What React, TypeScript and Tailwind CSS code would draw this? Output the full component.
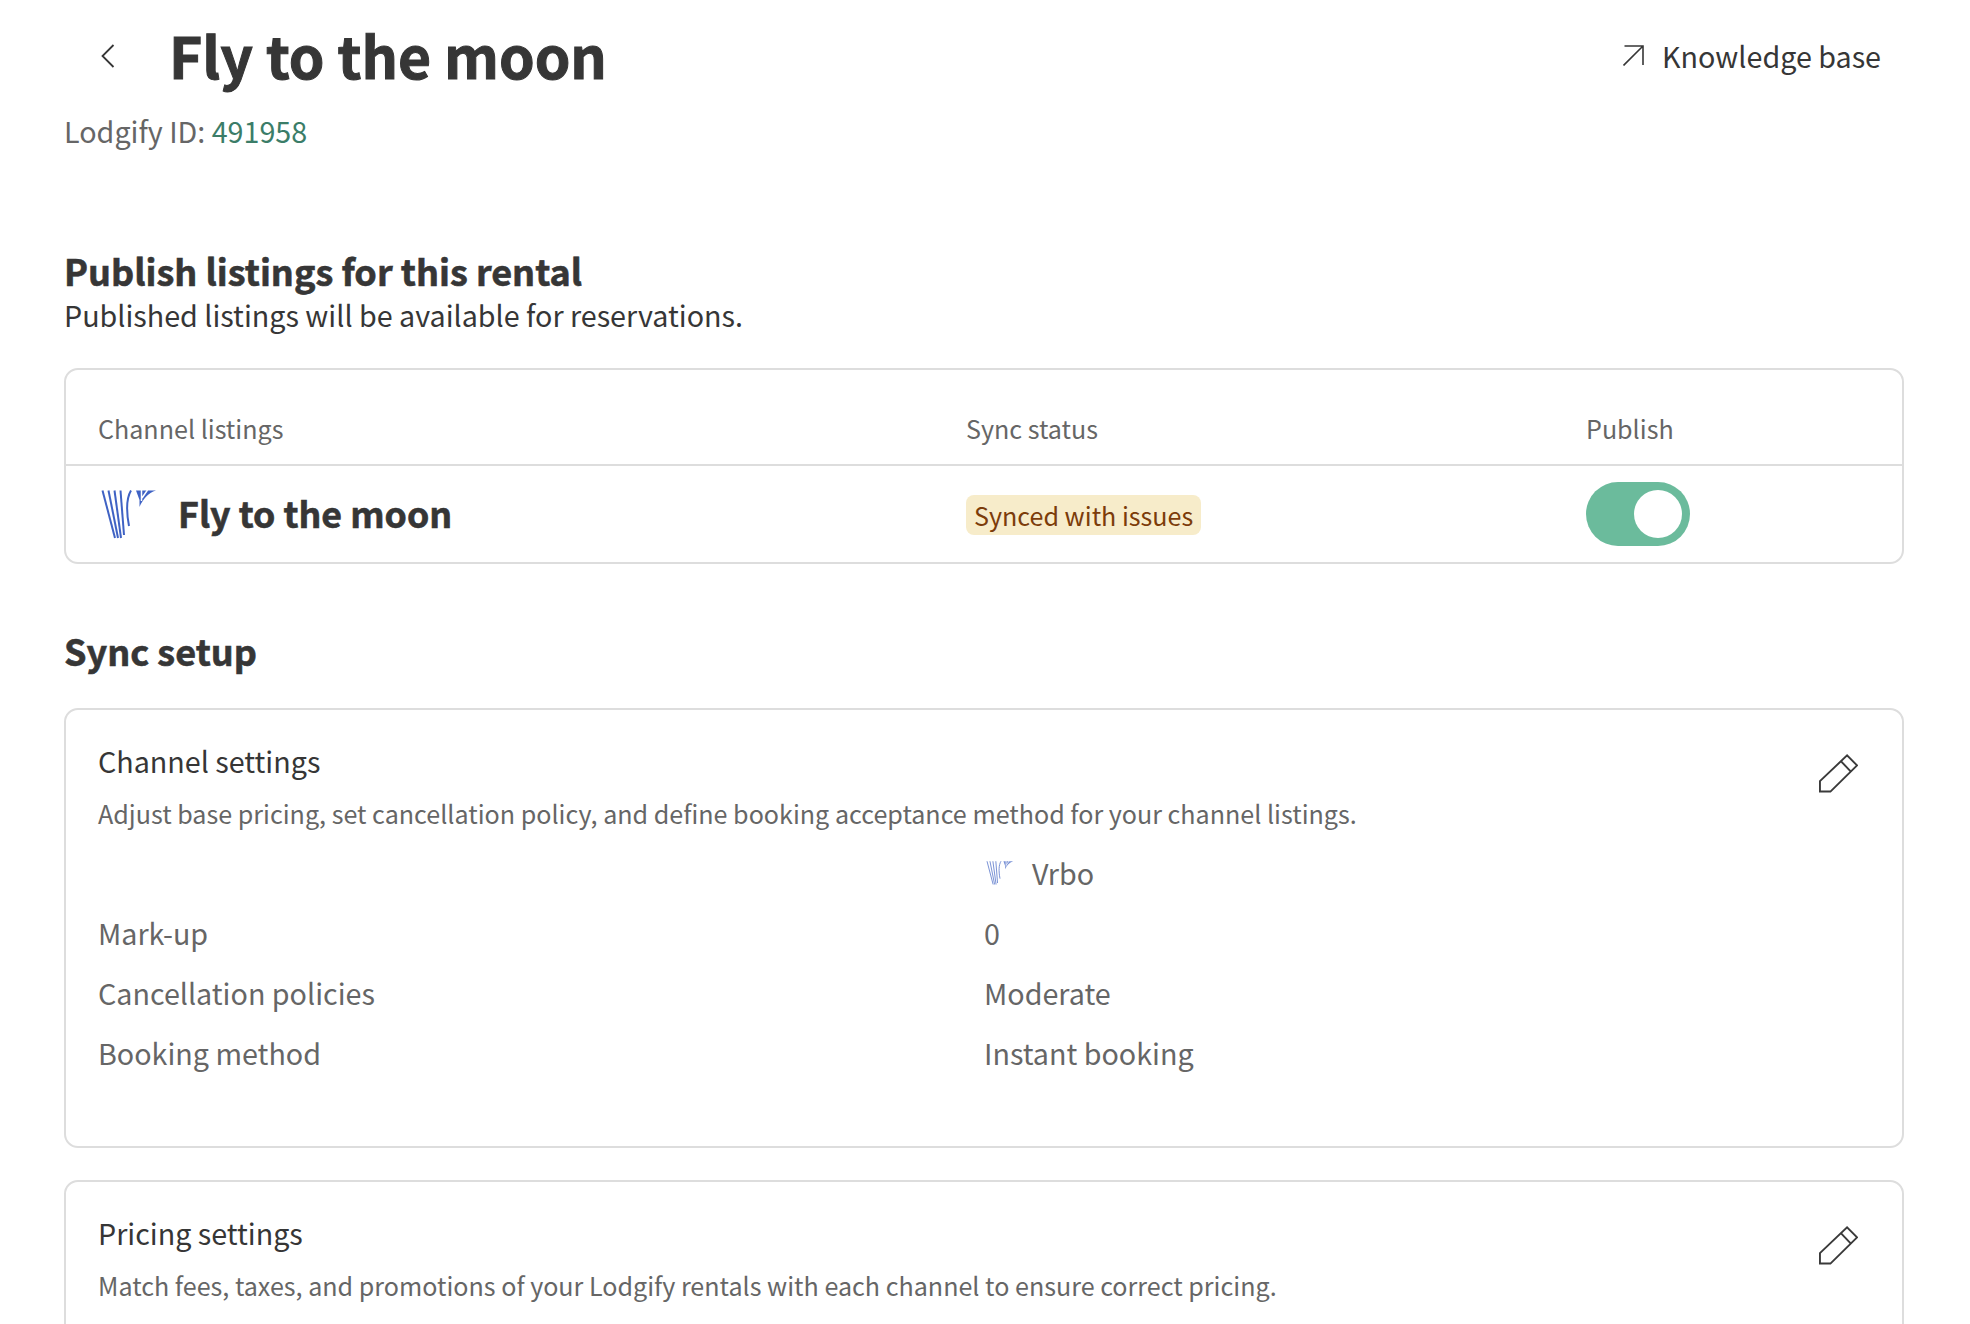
function Logo({ className }: { className: string }) {
  return (
    <svg viewBox="0 0 56 49" className={className} fill="none" stroke="#3f62c4">
      <g strokeWidth="2">
        <path d="M1.5 0.5 L14 48" />
        <path d="M7.5 0.5 L17 48" />
        <path d="M13.5 0.5 L20 48" />
        <path d="M19.5 0.5 L23 45" />
        <path d="M30 0.5 C 25.5 8 25 20 28 36" />
      </g>
      <path d="M35 0.5 H55 C 47 3 42 9 38.5 17 L38.5 10 Z" fill="#3f62c4" stroke="none" />
      <path d="M40.5 0 L40.5 11 M46.5 0 L41 8" stroke="#ffffff" strokeWidth="1.5" />
    </svg>
  );
}
function Pencil() {
  return (
    <svg viewBox="0 0 41 41" className="h-[39px] w-[39px]" fill="none" stroke="#3a3a3a" strokeWidth="2">
      <path d="M1 39.5 V28.5 L29.5 1.5 L40 12 L12 39.5 Z" />
      <path d="M23 7.5 L33.5 18.5" />
    </svg>
  );
}
function SettingRow({ label, value }: { label: string; value: string }) {
  return (
    <div className="flex h-[60px] items-center text-[28.7px] text-[#666666]">
      <div className="w-[886px]">{label}</div>
      <div>{value}</div>
    </div>
  );
}
export default function App() {
  return (
    <div className="h-[1324px] w-[1970px] overflow-hidden bg-white pl-[64px] pr-[66px] text-[#363636] [font-family:'Noto_Sans_CJK_SC','Noto_Sans_CJK_JP',sans-serif]">
      <div className="flex h-[112px] items-center justify-between">
        <div className="flex items-center">
          <svg viewBox="0 0 14 24" className="ml-[37px] h-[24px] w-[14px]" fill="none" stroke="#363636" strokeWidth="1.8">
            <path d="M12.5 1 L1.5 12 L12.5 23" />
          </svg>
          <h1 className="mb-[4px] ml-[54px] text-[57px] font-bold leading-[72px] [-webkit-text-stroke:1px_#363636]">Fly to the moon</h1>
        </div>
        <div className="mb-[1px] mr-[23px] flex items-center gap-[18px] text-[28.7px] leading-[40px]">
          <svg viewBox="0 0 21 21" className="h-[21px] w-[21px]" fill="none" stroke="#363636" strokeWidth="1.6">
            <path d="M0.5 20.5 L19.5 1.5 M1.5 1 H20 V20" />
          </svg>
          Knowledge base
        </div>
      </div>
      <div className="text-[28.7px] leading-[38px] text-[#666666]">
        Lodgify ID: <span className="text-[#3b7d68]">491958</span>
      </div>
      <h2 className="mt-[98px] text-[36px] font-bold leading-[44px] [-webkit-text-stroke:0.6px_#363636]">Publish listings for this rental</h2>
      <p className="pt-[1px] text-[28.7px] leading-[44px]">Published listings will be available for reservations.</p>
      <div className="mt-[31px] rounded-[14px] border-2 border-[#dddddd]">
        <div className="flex h-[94px] items-end pb-[18px] pl-[32px] text-[25.1px] leading-[36px] text-[#666666]">
          <div className="w-[868px]">Channel listings</div>
          <div className="w-[620px]">Sync status</div>
          <div>Publish</div>
        </div>
        <div className="flex h-[98px] items-center border-t-2 border-[#dddddd] pl-[32px]">
          <div className="flex w-[868px] items-center">
            <Logo className="ml-[3px] h-[49px] w-[56px]" />
            <span className="mb-[2px] ml-[21px] text-[35.7px] font-bold leading-[48px] [-webkit-text-stroke:0.6px_#363636]">Fly to the moon</span>
          </div>
          <div className="w-[620px] pt-[1px]">
            <span className="inline-block rounded-[8px] bg-[#f7ecca] px-[8px] text-[25.1px] leading-[40px] text-[#7c3c0a]">Synced with issues</span>
          </div>
          <div className="flex h-[64px] w-[104px] items-center justify-end rounded-full bg-[#6bbb9c] pr-[8px]">
            <div className="h-[48px] w-[48px] rounded-full bg-white" />
          </div>
        </div>
      </div>
      <h2 className="mt-[62px] text-[36px] font-bold leading-[48px] [-webkit-text-stroke:0.6px_#363636]">Sync setup</h2>
      <div className="mt-[34px] rounded-[14px] border-2 border-[#dddddd] px-[32px] pb-[63px] pt-[31px]">
        <div className="flex items-start justify-between">
          <div>
            <div className="text-[28.7px] leading-[40px]">Channel settings</div>
            <div className="mt-[12px] text-[25.1px] leading-[40px] text-[#666666]">Adjust base pricing, set cancellation policy, and define booking acceptance method for your channel listings.</div>
          </div>
          <div className="mr-[12px] mt-[13px]"><Pencil /></div>
        </div>
        <div className="mt-[10px] flex h-[60px] items-center text-[28.7px] text-[#666666]">
          <div className="w-[886px]" />
          <Logo className="ml-[2px] h-[24px] w-[28px] opacity-70" />
          <span className="ml-[18px]">Vrbo</span>
        </div>
        <SettingRow label="Mark-up" value="0" />
        <SettingRow label="Cancellation policies" value="Moderate" />
        <SettingRow label="Booking method" value="Instant booking" />
      </div>
      <div className="mt-[32px] rounded-[14px] border-2 border-[#dddddd] px-[32px] pb-[70px] pt-[31px]">
        <div className="flex items-start justify-between">
          <div>
            <div className="text-[28.7px] leading-[40px]">Pricing settings</div>
            <div className="mt-[12px] text-[25.1px] leading-[40px] text-[#666666]">Match fees, taxes, and promotions of your Lodgify rentals with each channel to ensure correct pricing.</div>
          </div>
          <div className="mr-[12px] mt-[13px]"><Pencil /></div>
        </div>
      </div>
    </div>
  );
}
